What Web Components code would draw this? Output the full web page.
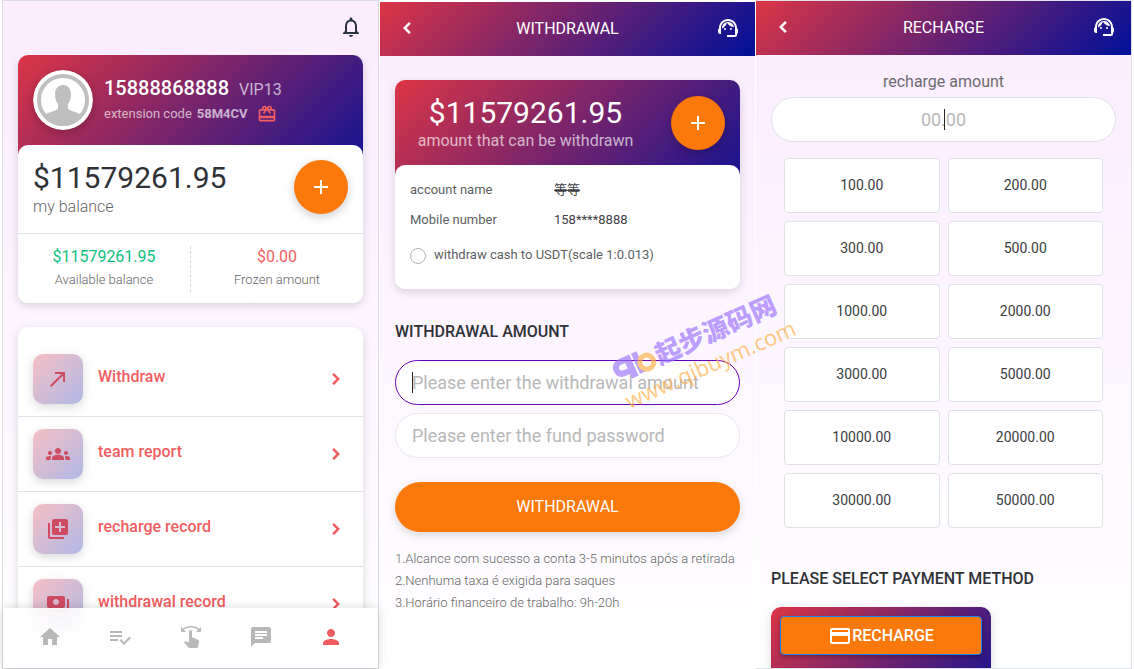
<!DOCTYPE html>
<html lang="en">
<head>
<meta charset="utf-8">
<meta name="viewport" content="width=device-width, initial-scale=1">
<title>Wallet</title>
<style>
  :root {
    --brand: linear-gradient(135deg, #dc3545 0%, #00109a 100%);
    --orange: #fb780a;
    --coral: #f25d61;
    --line: #dee2e6;
    --text: #2e3136;
    --muted: #777;
    --shadow: 0 3px 10px rgba(0, 0, 0, .15);
  }
  body {
    margin: 0;
    padding: 0 2px;
    position: relative;
    display: flex;
    height: 100vh;
    box-sizing: border-box;
    overflow: hidden;
    background: #fff;
    font: 400 13px/20px Roboto, "Noto Sans CJK SC", sans-serif;
    color: var(--text);
  }
  .home { border: 1px solid #dcdce0; }
  .withdraw { border: solid #fff; border-width: 2px 1px 0; }
  .recharge { border: solid var(--line); border-width: 1px 1px 1px 0; }
</style>
</head>
<body>

<phone-screen class="home">
  <top-row slot="header"></top-row>
  <brand-card>
    <user-summary slot="head" phone="15888868888" level="VIP13" code="58M4CV"></user-summary>
    <balance-panel></balance-panel>
  </brand-card>
  <menu-list>
    <menu-item icon="northEast">Withdraw</menu-item>
    <menu-item icon="groups">team report</menu-item>
    <menu-item icon="libraryAdd">recharge record</menu-item>
    <menu-item icon="payments">withdrawal record</menu-item>
  </menu-list>
  <tab-bar slot="footer"></tab-bar>
</phone-screen>

<phone-screen class="withdraw">
  <title-bar slot="header">WITHDRAWAL</title-bar>
  <withdraw-form></withdraw-form>
</phone-screen>

<phone-screen class="recharge">
  <title-bar slot="header">RECHARGE</title-bar>
  <recharge-form></recharge-form>
</phone-screen>

<site-mark></site-mark>

<template id="phone-screen">
  <style>
    :host {
      display: flex;
      flex-direction: column;
      flex: 1 1 0;
      min-width: 0;
      background: linear-gradient(#fbecff, #fdf7ff 60%, #fff);
    }
    main {
      flex: 1;
      min-height: 0;
      padding: 0 15px;
      overflow: auto;
      scrollbar-width: none;
    }
  </style>
  <slot name="header"></slot>
  <main><slot></slot></main>
  <slot name="footer"></slot>
</template>

<template id="top-row">
  <style>
    :host { display: flex; justify-content: flex-end; padding: 14px 15px 16px; }
    button { display: flex; padding: 0; border: 0; background: none; color: #2b3440; }
  </style>
  <button aria-label="Notifications"><ui-icon name="bell"></ui-icon></button>
</template>

<template id="title-bar">
  <style>
    :host {
      display: flex;
      flex: none;
      align-items: center;
      justify-content: space-between;
      height: 54px;
      padding: 0 15px;
      background: var(--brand);
      color: #fff;
    }
    h1 { margin: 0; font-size: 16px; font-weight: 400; }
    button { display: flex; padding: 0 0 2px; border: 0; background: none; color: inherit; }
  </style>
  <button aria-label="Back"><ui-icon name="back"></ui-icon></button>
  <h1><slot></slot></h1>
  <button aria-label="Support"><ui-icon name="support"></ui-icon></button>
</template>

<template id="brand-card">
  <style>
    :host {
      display: block;
      border-radius: 10px;
      background: #fff;
      box-shadow: var(--shadow);
    }
    /* the gradient runs on beneath the white section */
    header {
      padding: 15px 15px 25px;
      border-radius: 10px 10px 0 0;
      background: var(--brand) 0 0 / 100% 150px;
      color: #fff;
    }
    section {
      position: relative;
      margin-top: -10px;
      border-radius: 10px;
      background: #fff;
    }
  </style>
  <header><slot name="head"></slot></header>
  <section><slot></slot></section>
</template>

<template id="user-summary">
  <style>
    :host { display: flex; align-items: center; gap: 11px; }
    svg { width: 60px; height: 60px; border-radius: 50%; box-shadow: 0 3px 8px rgba(0, 0, 0, .2); }
    p { display: flex; margin: 0; }
    .name { align-items: baseline; gap: 10px; padding-bottom: 2px; line-height: 24px; font-size: 16px; }
    .name strong { font-size: 20px; font-weight: 500; }
    .name span, .code span, .code strong { opacity: .65; }
    .code { align-items: center; gap: 5px; line-height: 20px; }
    .code strong { font-weight: 700; }
    ui-icon { --size: 20px; margin-left: 4px; color: var(--coral); }
  </style>
  <svg viewBox="0 0 60 60" aria-hidden="true">
    <circle cx="30" cy="30" r="30" fill="#fff"/>
    <circle cx="30" cy="30" r="24" fill="none" stroke="#bfbfbf" stroke-width="4"/>
    <path fill="#bfbfbf" d="M30 15c-5 0-8 4-8 9 0 4 1 8 3 10v4c0 3-10 4-13 7 4 7 11 11 18 11s14-4 18-11c-3-3-13-4-13-7v-4c2-2 3-6 3-10 0-5-3-9-8-9z"/>
  </svg>
  <div>
    <p class="name"><strong data-attr="phone"></strong><span data-attr="level"></span></p>
    <p class="code"><span>extension code</span><strong data-attr="code"></strong><ui-icon name="gift"></ui-icon></p>
  </div>
</template>

<template id="balance-panel">
  <style>
    :host { display: block; }
    p { margin: 0; }
    .total {
      display: flex;
      align-items: flex-start;
      justify-content: space-between;
      padding: 15px;
      border-bottom: 1px solid var(--line);
    }
    .total strong { display: block; font-size: 30px; font-weight: 400; line-height: 36px; }
    .total span { display: block; color: #666; font-size: 16px; font-weight: 300; line-height: 22px; }
    .split { display: flex; padding: 12px 0 11px; text-align: center; color: #666; font-weight: 300; }
    .split div { flex: 1; line-height: 24px; }
    .split div + div { border-left: 1px dashed #d8d8d8; }
    .split strong { display: block; font-size: 16px; font-weight: 400; line-height: 22px; }
    .free { color: #0fbf7f; }
    .frozen { color: var(--coral); }
  </style>
  <div class="total">
    <p><strong>$11579261.95</strong><span>my balance</span></p>
    <add-button></add-button>
  </div>
  <div class="split">
    <div><strong class="free">$11579261.95</strong>Available balance</div>
    <div><strong class="frozen">$0.00</strong>Frozen amount</div>
  </div>
</template>

<template id="add-button">
  <style>
    :host { display: block; flex: none; }
    button {
      display: flex;
      align-items: center;
      justify-content: center;
      width: 54px;
      height: 54px;
      padding: 0;
      border: 0;
      border-radius: 50%;
      background: var(--orange);
      color: #fff;
      box-shadow: 0 3px 10px rgba(0, 0, 0, .2);
    }
  </style>
  <button aria-label="Add funds"><ui-icon name="add"></ui-icon></button>
</template>

<template id="menu-list">
  <style>
    :host {
      display: block;
      margin-top: 24px;
      padding: 15px 0 60px;
      border-radius: 10px;
      background: #fff;
      box-shadow: var(--shadow);
    }
  </style>
  <slot></slot>
</template>

<template id="menu-item">
  <style>
    :host { display: block; border-bottom: 1px solid var(--line); }
    a {
      display: flex;
      align-items: center;
      gap: 15px;
      padding: 12px 15px;
      color: var(--coral);
      font-size: 16px;
      font-weight: 500;
      text-decoration: none;
    }
    .tile {
      display: flex;
      align-items: center;
      justify-content: center;
      width: 50px;
      height: 50px;
      border-radius: 10px;
      background: linear-gradient(135deg, #f5bfc4, #b0b8e6);
      color: #cf4b62;
      box-shadow: var(--shadow);
    }
    .label { flex: 1; padding-bottom: 4px; }
  </style>
  <a href="#">
    <span class="tile"><ui-icon></ui-icon></span>
    <span class="label"><slot></slot></span>
    <ui-icon name="next"></ui-icon>
  </a>
</template>

<template id="tab-bar">
  <style>
    /* floats over the end of the scrolled content */
    :host {
      display: block;
      position: relative;
      flex: none;
      margin-top: -60px;
      background: rgba(255, 255, 255, .88);
      backdrop-filter: blur(10px);
      box-shadow: 0 0 10px rgba(0, 0, 0, .15);
    }
    nav { display: flex; align-items: center; height: 58px; padding: 0 12px 2px; }
    a { display: flex; flex: 1; justify-content: center; color: #b8b8b8; }
    a[aria-current] { color: var(--coral); }
  </style>
  <nav>
    <a href="#" aria-label="Home"><ui-icon name="home"></ui-icon></a>
    <a href="#" aria-label="Orders"><ui-icon name="checklist"></ui-icon></a>
    <a href="#" aria-label="Grab"><ui-icon name="swipe"></ui-icon></a>
    <a href="#" aria-label="Messages"><ui-icon name="chat"></ui-icon></a>
    <a href="#" aria-label="Account" aria-current="page"><ui-icon name="person"></ui-icon></a>
  </nav>
</template>

<template id="pill-field">
  <style>
    :host { display: block; --edge: #e8e8ee; }
    :host([active]) { --edge: #6a00b8; }
    :host([center]) { --edge: var(--line); text-align: center; }
    label { display: block; padding-bottom: 5px; color: #6c6c70; font-size: 16px; line-height: 20px; }
    label:empty { display: none; }
    .box { position: relative; }
    input {
      display: block;
      width: 100%;
      height: 45px;
      box-sizing: border-box;
      padding: 0 16px;
      border: 1px solid var(--edge);
      border-radius: 23px;
      outline: 0;
      background: #fff;
      color: inherit;
      font: inherit;
      font-size: 18px;
      text-align: inherit;
    }
    input::placeholder { color: #b8b8b8; opacity: 1; }
    /* caret bar */
    i { display: none; position: absolute; top: 12px; left: 17px; width: 1px; height: 21px; background: #222; }
    :host([caret]) i { display: block; }
    :host([center]) i { left: 50%; }
  </style>
  <label for="field"></label>
  <div class="box"><input id="field"><i></i></div>
</template>

<template id="withdraw-form">
  <style>
    :host { display: block; padding-top: 24px; }
    .head { display: flex; align-items: center; gap: 30px; height: 55px; }
    .head p { flex: 1; margin: 0; text-align: center; font-size: 16px; line-height: 20px; }
    .head strong { display: block; font-size: 30px; font-weight: 400; line-height: 36px; }
    .head span { opacity: .65; }
    .details { padding: 15px 15px 24px; color: #5c5f63; }
    dl { display: grid; grid-template-columns: 144px 1fr; row-gap: 10px; margin: 0 0 15px; }
    dd { margin: 0; color: #3f4246; }
    dd s { text-decoration-thickness: 1px; }
    label { display: flex; align-items: center; gap: 8px; }
    label input {
      appearance: none;
      width: 16px;
      height: 16px;
      margin: 2px 0 0;
      border: 1px solid #adb5bd;
      border-radius: 50%;
      background: #fff;
    }
    h2 { margin: 33px 0 18px; font-size: 16px; font-weight: 500; line-height: 20px; }
    pill-field + pill-field { margin-top: 8px; }
    .submit {
      width: 100%;
      height: 50px;
      margin: 24px 0 16px;
      border: 0;
      border-radius: 25px;
      background: var(--orange);
      color: #fff;
      font: inherit;
      font-size: 16px;
      box-shadow: var(--shadow);
    }
    .notes { margin: 0; line-height: 22px; color: #666; font-weight: 300; white-space: nowrap; }
  </style>
  <brand-card>
    <div class="head" slot="head">
      <p><strong>$11579261.95</strong><span>amount that can be withdrawn</span></p>
      <add-button></add-button>
    </div>
    <div class="details">
      <dl>
        <dt>account name</dt><dd><s>等等</s></dd>
        <dt>Mobile number</dt><dd>158****8888</dd>
      </dl>
      <label><input type="radio" name="usdt">withdraw cash to USDT(scale 1:0.013)</label>
    </div>
  </brand-card>
  <h2>WITHDRAWAL AMOUNT</h2>
  <pill-field active caret placeholder="Please enter the withdrawal amount"></pill-field>
  <pill-field type="password" placeholder="Please enter the fund password"></pill-field>
  <button class="submit">WITHDRAWAL</button>
  <p class="notes">1.Alcance com sucesso a conta 3-5 minutos após a retirada<br>2.Nenhuma taxa é exigida para saques<br>3.Horário financeiro de trabalho: 9h-20h</p>
</template>

<template id="recharge-form">
  <style>
    :host { display: block; padding-top: 17px; }
    .amounts { display: grid; grid-template-columns: 1fr 1fr; gap: 8px; margin: 16px 13px 0; }
    .amounts button {
      height: 55px;
      padding: 0 0 2px;
      border: 1px solid var(--line);
      border-radius: 4px;
      background: #fff;
      color: #3a3d42;
      font: inherit;
      font-size: 14px;
    }
    h2 { margin: 41px 0 18px; font-size: 16px; font-weight: 500; line-height: 20px; }
    .method {
      width: 220px;
      height: 120px;
      box-sizing: border-box;
      padding: 9px;
      border-radius: 10px;
      background: var(--brand);
      box-shadow: var(--shadow);
    }
    .method button {
      display: flex;
      align-items: center;
      justify-content: center;
      width: 100%;
      height: 39px;
      padding: 0;
      border: 1px solid #1a82f7;
      border-radius: 4px;
      background: var(--orange);
      color: #fff;
      font: inherit;
      font-size: 16px;
      font-weight: 500;
      box-shadow: 0 2px 4px rgba(0, 0, 0, .3);
    }
  </style>
  <pill-field center caret label="recharge amount" placeholder="00.00"></pill-field>
  <div class="amounts"></div>
  <h2>PLEASE SELECT PAYMENT METHOD</h2>
  <div class="method"><button><ui-icon name="card"></ui-icon>RECHARGE</button></div>
</template>

<template id="site-mark">
  <style>
    :host {
      position: absolute;
      left: 62%;
      top: 52%;
      transform: translate(-50%, -50%) rotate(-24deg);
      opacity: .65;
      pointer-events: none;
      white-space: nowrap;
    }
    div { display: flex; align-items: center; color: #9a70ff; font: 900 26px/34px "Noto Sans CJK SC", sans-serif; }
    svg { width: 46px; height: 28px; }
    span { display: block; color: #ffad42; font: 400 22px/26px "Open Sans", sans-serif; }
  </style>
  <div>
    <svg viewBox="0 0 46 28" aria-hidden="true">
      <path fill="#9a70ff" fill-rule="evenodd" d="M11 3h11v23h-7v-5H9c-5 0-8-4-8-9s4-9 10-9zm4 6h-4c-3 0-4 2-4 3s1 3 4 3h4z"/>
      <path fill="#9a70ff" d="M24 3h6v22h-6z"/>
      <circle cx="35" cy="17" r="7" fill="none" stroke="#ffad42" stroke-width="5"/>
    </svg>起步源码网
  </div>
  <span>www.qibuym.com</span>
</template>

<script>
// Icon shapes on a 24px grid
const ICONS = {
  bell: 'M12 22c1.1 0 2-.9 2-2h-4c0 1.1.9 2 2 2zm6-6v-5c0-3.07-1.63-5.64-4.5-6.32V4c0-.83-.67-1.5-1.5-1.5s-1.5.67-1.5 1.5v.68C7.64 5.36 6 7.92 6 11v5l-2 2v1h16v-1l-2-2zm-2 1H8v-6c0-2.48 1.51-4.5 4-4.5s4 2.02 4 4.5v6z',
  gift: 'M20 6h-2.18c.11-.31.18-.65.18-1 0-1.66-1.34-3-3-3-1.05 0-1.96.54-2.5 1.35l-.5.67-.5-.68C10.96 2.54 10.05 2 9 2 7.34 2 6 3.34 6 5c0 .35.07.69.18 1H4c-1.11 0-1.99.89-1.99 2L2 19c0 1.11.89 2 2 2h16c1.11 0 2-.89 2-2V8c0-1.11-.89-2-2-2zm-5-2c.55 0 1 .45 1 1s-.45 1-1 1-1-.45-1-1 .45-1 1-1zM9 4c.55 0 1 .45 1 1s-.45 1-1 1-1-.45-1-1 .45-1 1-1zm11 15H4v-2h16v2zm0-5H4V8h5.08L7 10.83 8.62 12 11 8.76l1-1.36 1 1.36L15.38 12 17 10.83 14.92 8H20v6z',
  northEast: 'M9 5v2h6.59L4 18.59 5.41 20 17 8.41V15h2V5z',
  groups: 'M12 12.75c1.63 0 3.07.39 4.24.9 1.08.48 1.76 1.56 1.76 2.73V18H6v-1.61c0-1.18.68-2.26 1.76-2.73 1.17-.52 2.61-.91 4.24-.91zM4 13c1.1 0 2-.9 2-2s-.9-2-2-2-2 .9-2 2 .9 2 2 2zm1.13 1.1c-.37-.06-.74-.1-1.13-.1-.99 0-1.93.21-2.78.58C.48 14.9 0 15.62 0 16.43V18h4.5v-1.61c0-.83.23-1.61.63-2.29zM20 13c1.1 0 2-.9 2-2s-.9-2-2-2-2 .9-2 2 .9 2 2 2zm4 3.43c0-.81-.48-1.53-1.22-1.85-.85-.37-1.79-.58-2.78-.58-.39 0-.76.04-1.13.1.4.68.63 1.46.63 2.29V18H24v-1.57zM12 6c1.66 0 3 1.34 3 3s-1.34 3-3 3-3-1.34-3-3 1.34-3 3-3z',
  libraryAdd: 'M4 6H2v14c0 1.1.9 2 2 2h14v-2H4V6zm16-4H8c-1.1 0-2 .9-2 2v12c0 1.1.9 2 2 2h12c1.1 0 2-.9 2-2V4c0-1.1-.9-2-2-2zm-1 9h-4v4h-2v-4H9V9h4V5h2v4h4v2z',
  payments: 'M19 14V6c0-1.1-.9-2-2-2H3c-1.1 0-2 .9-2 2v8c0 1.1.9 2 2 2h14c1.1 0 2-.9 2-2zm-9-1c-1.66 0-3-1.34-3-3s1.34-3 3-3 3 1.34 3 3-1.34 3-3 3zm13-6v11c0 1.1-.9 2-2 2H4v-2h17V7h2z',
  home: 'M10 20v-6h4v6h5v-8h3L12 3 2 12h3v8z',
  checklist: 'M14 10H2v2h12v-2zm0-4H2v2h12V6zM2 16h8v-2H2v2zm19.5-4.5L23 13l-6.99 7-4.51-4.5L13 14l3.01 3 5.49-5.5z',
  swipe: 'M18.89 14.75l-4.09-2.04c-.28-.14-.58-.21-.89-.21H13v-6c0-.83-.67-1.5-1.5-1.5S10 5.67 10 6.5v10.74l-3.25-.74c-.33-.07-.68.03-.92.28L5 17.62l4.54 4.79c.38.38 1.14.59 1.67.59h6.16c1 0 1.84-.73 1.98-1.72l.63-4.46c.12-.85-.32-1.68-1.09-2.07zM20.13 3.87C18.69 2.17 15.6 1 12 1S5.31 2.17 3.87 3.87L2 2v5h5L4.93 4.93c1-1.29 3.7-2.43 7.07-2.43s6.07 1.14 7.07 2.43L17 7h5V2l-1.87 1.87z',
  chat: 'M20 2H4c-1.1 0-1.99.9-1.99 2L2 22l4-4h14c1.1 0 2-.9 2-2V4c0-1.1-.9-2-2-2zM6 9h12v2H6V9zm8 5H6v-2h8v2zm4-6H6V6h12v2z',
  person: 'M12 12c2.21 0 4-1.79 4-4s-1.79-4-4-4-4 1.79-4 4 1.79 4 4 4zm0 2c-2.67 0-8 1.34-8 4v2h16v-2c0-2.66-5.33-4-8-4z',
  next: 'M10 6L8.2 7.8l4.2 4.2-4.2 4.2L10 18l6-6z',
  back: 'M14 6l1.8 1.8-4.2 4.2 4.2 4.2L14 18l-6-6z',
  support: 'M21 12.22C21 6.73 16.74 3 12 3c-4.69 0-9 3.65-9 9.28-.6.34-1 .98-1 1.72v2c0 1.1.9 2 2 2h1v-6.1c0-3.87 3.13-7 7-7s7 3.13 7 7V19h-8v2h8c1.1 0 2-.9 2-2v-1.22c.59-.31 1-.92 1-1.64v-2.3c0-.7-.41-1.31-1-1.62zM9 12a1 1 0 100 2 1 1 0 000-2zM15 12a1 1 0 100 2 1 1 0 000-2zM18 11.03C17.52 8.18 15.04 6 12.05 6c-3.03 0-6.29 2.51-6.03 6.45 2.47-1.01 4.33-3.21 4.86-5.89 1.31 2.63 4 4.44 7.12 4.47z',
  card: 'M20 4H4c-1.11 0-1.99.89-1.99 2L2 18c0 1.11.89 2 2 2h16c1.11 0 2-.89 2-2V6c0-1.11-.89-2-2-2zm0 14H4v-6h16v6zm0-10H4V6h16v2z',
  add: 'M19 13h-6v6h-2v-6H5v-2h6V5h2v6h6z',
};

class UiIcon extends HTMLElement {
  static get observedAttributes() { return ['name']; }
  constructor() {
    super();
    this.attachShadow({mode: 'open'});
  }
  attributeChangedCallback() {
    this.shadowRoot.innerHTML = `
      <style>
        :host { display: block; flex: none; width: var(--size, 24px); height: var(--size, 24px); }
        svg { display: block; width: 100%; height: 100%; fill: currentColor; }
      </style>
      <svg viewBox="0 0 24 24" aria-hidden="true"><path d="${ICONS[this.getAttribute('name')]}"/></svg>`;
  }
}
customElements.define('ui-icon', UiIcon);

// Clones the template whose id is the tag name
class TemplateElement extends HTMLElement {
  constructor() {
    super();
    const template = document.getElementById(this.localName);
    this.attachShadow({mode: 'open'}).appendChild(template.content.cloneNode(true));
  }
}

class UserSummary extends TemplateElement {
  connectedCallback() {
    this.shadowRoot.querySelectorAll('[data-attr]').forEach(node => {
      node.textContent = this.getAttribute(node.dataset.attr);
    });
  }
}

class MenuItem extends TemplateElement {
  connectedCallback() {
    this.shadowRoot.querySelector('.tile ui-icon').setAttribute('name', this.getAttribute('icon'));
  }
}

class PillField extends TemplateElement {
  connectedCallback() {
    const input = this.shadowRoot.querySelector('input');
    const placeholder = this.getAttribute('placeholder');
    const label = this.getAttribute('label');
    input.type = this.getAttribute('type') || 'text';
    input.placeholder = placeholder;
    if (label) {
      this.shadowRoot.querySelector('label').textContent = label;
    } else {
      input.setAttribute('aria-label', placeholder);
    }
  }
}

class RechargeForm extends TemplateElement {
  connectedCallback() {
    const amounts = [100, 200, 300, 500, 1000, 2000, 3000, 5000, 10000, 20000, 30000, 50000];
    this.shadowRoot.querySelector('.amounts').innerHTML =
      amounts.map(amount => `<button>${amount.toFixed(2)}</button>`).join('');
  }
}

['phone-screen', 'top-row', 'title-bar', 'brand-card', 'balance-panel', 'add-button',
  'menu-list', 'tab-bar', 'withdraw-form', 'site-mark'].forEach(tag => {
  customElements.define(tag, class extends TemplateElement {});
});
customElements.define('user-summary', UserSummary);
customElements.define('menu-item', MenuItem);
customElements.define('pill-field', PillField);
customElements.define('recharge-form', RechargeForm);
</script>
</body>
</html>
